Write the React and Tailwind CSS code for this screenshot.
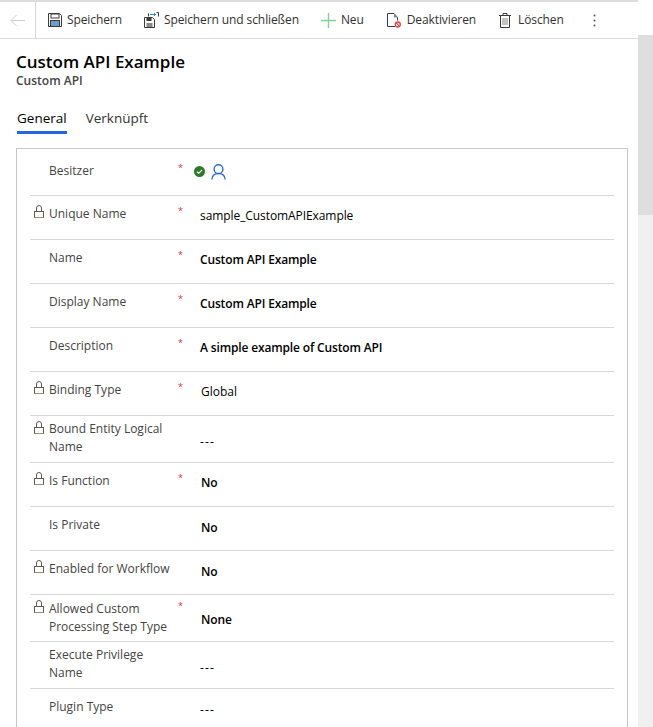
// Toolbar icons
const SaveIcon = () => (
  <svg width="14" height="14" viewBox="0 0 14 14" fill="none">
    <path d="M.5.5h11l2 2v11H.5z" fill="#fff" stroke="#3b3a39" />
    <rect x="3" y="1" width="8" height="4" fill="#fff" stroke="#3b3a39" strokeWidth="1" />
    <rect x="2.5" y="7.5" width="9" height="6" fill="#6d9ec9" stroke="#3b3a39" />
  </svg>
)

const SaveCloseIcon = () => (
  <svg width="15" height="16" viewBox="0 0 15 16" fill="none">
    <path d="M.5 5.5h8l2 2v8H.5z" fill="#fff" stroke="#3b3a39" />
    <rect x="2.5" y="6" width="5" height="3" fill="#3b3a39" />
    <rect x="2.5" y="11" width="6" height="4" fill="#8a8886" />
    <path d="M4.5 1.5v3M14.5.5v4M12.5.5h2" stroke="#3b3a39" />
    <path d="M6 2.5h5.5M10 1l1.5 1.5L10 4" stroke="#2b88d8" />
  </svg>
)

const PlusIcon = () => (
  <svg width="15" height="15" viewBox="0 0 15 15">
    <path d="M7.5 0v15M0 7.5h15" stroke="#83cfa0" strokeWidth="1.4" />
  </svg>
)

const DeactivateIcon = () => (
  <svg width="14" height="15" viewBox="0 0 14 15" fill="none">
    <path d="M8 13.5H.5V.5h6.5l3.5 4v3" stroke="#3b3a39" />
    <path d="M7 .5l3.5 4H7z" fill="#8a8886" />
    <circle cx="10.8" cy="11.5" r="2.5" fill="#fff" stroke="#e0454f" strokeWidth="1.3" />
    <path d="M9.1 9.8l3.4 3.4" stroke="#e0454f" strokeWidth="1.2" />
  </svg>
)

const TrashIcon = () => (
  <svg width="12" height="15" viewBox="0 0 12 15" fill="none">
    <path d="M0 2.5h12M4 2.5V.5h4v2" stroke="#3b3a39" />
    <path d="M1.5 2.5v12h9v-12" stroke="#3b3a39" />
    <path d="M4 5v7M6 5v7M8 5v7" stroke="#8a8886" />
  </svg>
)

const LockIcon = () => (
  <svg width="10" height="13" viewBox="0 0 10 13" fill="none">
    <path d="M2.5 7V3a2.5 2.5 0 0 1 5 0v4" stroke="#5f5b57" />
    <rect x=".5" y="6.5" width="9" height="6" fill="#fff" stroke="#5f5b57" />
    <path d="M.5 12.5h9" stroke="#a08c73" />
  </svg>
)

const StatusIcon = () => (
  <svg width="11" height="11" viewBox="0 0 11 11" fill="none">
    <circle cx="5.5" cy="5.5" r="5.5" fill="#2f7a2a" />
    <path d="M3 5.8l1.7 1.5L8 4" stroke="#fff" strokeWidth="1.2" />
  </svg>
)

const UserIcon = () => (
  <svg width="15" height="16" viewBox="0 0 15 16" fill="none">
    <circle cx="7.5" cy="5.2" r="4.4" stroke="#2a6fc9" strokeWidth="1.4" />
    <path d="M.8 15.5c.3-3.5 2.8-6 6.7-6s6.4 2.5 6.7 6" stroke="#2a6fc9" strokeWidth="1.4" />
  </svg>
)

const ACTIONS = [
  { label: 'Speichern', icon: <SaveIcon />, cls: 'gap-[5px]' },
  { label: 'Speichern und schließen', icon: <SaveCloseIcon />, cls: 'gap-[5px]' },
  { label: 'Neu', icon: <PlusIcon />, cls: 'gap-[5px]' },
  { label: 'Deaktivieren', icon: <DeactivateIcon />, cls: 'gap-[6px] ml-[1px]' },
  { label: 'Löschen', icon: <TrashIcon />, cls: 'gap-[7px] ml-[1px]' },
]

// row kinds: first row, one line label, two line label
const ROW = {
  first: { h: 'h-[47px]', lock: 'pt-[9px]', label: 'pt-[13px]', star: 'pt-[10px]', value: 'pb-[1px]' },
  single: { h: 'h-[44px]', lock: 'pt-[9px]', label: 'pt-[9px]', star: 'pt-[6px]', value: 'pb-[3px]' },
  double: { h: 'h-[47px]', lock: 'pt-[5px]', label: 'pt-[4px]', star: 'pt-[2px]', value: 'pt-[5px]' },
}

const STRONG = 'font-semibold tracking-[-0.15px]'
const EMPTY = 'font-normal tracking-[1.2px]'

const FIELDS = [
  { label: 'Besitzer', required: true, owner: true, kind: 'first' },
  { label: 'Unique Name', required: true, locked: true, value: 'sample_CustomAPIExample', kind: 'single', cls: 'tracking-[-0.08px]' },
  { label: 'Name', required: true, value: 'Custom API Example', kind: 'single', cls: STRONG },
  { label: 'Display Name', required: true, value: 'Custom API Example', kind: 'single', cls: STRONG },
  { label: 'Description', required: true, value: 'A simple example of Custom API', kind: 'single', cls: STRONG },
  { label: 'Binding Type', required: true, locked: true, value: 'Global', kind: 'single', cls: 'pl-[1px]' },
  { label: 'Bound Entity Logical Name', locked: true, value: '---', kind: 'double', cls: EMPTY },
  { label: 'Is Function', required: true, locked: true, value: 'No', kind: 'single', cls: `${STRONG} pl-[1px]` },
  { label: 'Is Private', value: 'No', kind: 'single', cls: `${STRONG} pl-[1px] pb-[1px]` },
  { label: 'Enabled for Workflow', locked: true, value: 'No', kind: 'single', cls: `${STRONG} pl-[1px] pb-[1px]` },
  { label: 'Allowed Custom Processing Step Type', required: true, locked: true, value: 'None', kind: 'double', labelCls: 'pt-[5px]', cls: `${STRONG} pl-[1px] pt-[3px]` },
  { label: 'Execute Privilege Name', value: '---', kind: 'double', cls: EMPTY },
  { label: 'Plugin Type', value: '---', kind: 'single', cls: EMPTY },
]

function FieldRow({ field }) {
  const r = ROW[field.kind]
  return (
    <div className={`flex ${r.h} border-b border-[#d8d8d8] last:border-b-0`}>
      <div className={`w-[19px] shrink-0 pl-[4px] ${r.lock}`}>{field.locked && <LockIcon />}</div>
      <div className={`w-[129px] shrink-0 text-[12px] leading-[18px] text-[#444] ${field.labelCls || r.label}`}>{field.label}</div>
      <div className={`w-[22px] shrink-0 text-[9px] leading-[18px] text-[#d13438] ${r.star}`}>{field.required && '*'}</div>
      <div className={`flex flex-1 items-center text-[12px] text-black ${field.cls?.includes('pb-') || field.cls?.includes('pt-') ? '' : r.value} ${field.cls || ''}`}>
        {field.owner ? (
          <span className="-ml-[6px] flex items-center gap-[6px]"><StatusIcon /><UserIcon /></span>
        ) : (
          field.value
        )}
      </div>
    </div>
  )
}

export default function App() {
  return (
    <div className="flex h-[727px] w-[653px] overflow-hidden bg-white font-['Open_Sans',sans-serif]">
      <div className="w-[638px] shrink-0">
        {/* Command bar */}
        <div className="flex h-[39px] items-center border-t-2 border-b border-[#dcdcdc]">
          <div className="flex h-full w-[36px] items-center justify-center border-r border-[#d8d8d8]">
            <svg width="15" height="13" viewBox="0 0 15 13" fill="none">
              <path d="M15 6.5H1M6.5 1L1 6.5 6.5 12" stroke="#d0cfce" />
            </svg>
          </div>
          <div className="flex items-center gap-[22px] pl-[12px]">
            {ACTIONS.map((a) => (
              <div key={a.label} className={`flex shrink-0 items-center text-[12px] tracking-[-0.1px] text-[#323130] ${a.cls}`}>
                {a.icon}
                <span className="whitespace-nowrap">{a.label}</span>
              </div>
            ))}
            <svg className="ml-[7px]" width="3" height="13" viewBox="0 0 3 13">
              <circle cx="1.5" cy="1.5" r="1" fill="#555" />
              <circle cx="1.5" cy="6.5" r="1" fill="#555" />
              <circle cx="1.5" cy="11.5" r="1" fill="#555" />
            </svg>
          </div>
        </div>

        {/* Header */}
        <div className="px-4 pt-[11px]">
          <h1 className="text-[17px] font-semibold leading-[23px] text-black">Custom API Example</h1>
          <p className="text-[12px] font-semibold leading-[15px] text-[#444]">Custom API</p>
          <div className="mt-[20px] flex gap-[19px] pl-[1px] text-[13.5px] leading-[20px]">
            <div className="border-b-[3px] border-[#2266e3] pb-[3px] font-medium text-black">General</div>
            <div className="font-medium text-[#333]">Verknüpft</div>
          </div>
        </div>

        {/* Form card */}
        <div className="ml-4 mt-[14px] w-[612px] border border-b-0 border-[#c8c8c8] px-[13px]">
          {FIELDS.map((f) => (
            <FieldRow key={f.label} field={f} />
          ))}
        </div>
      </div>

      {/* Scrollbar */}
      <div className="flex w-[15px] shrink-0 flex-col pt-[35px]">
        <div className="h-[180px] bg-[#dedede]" />
        <div className="flex-1 bg-[#f0f0f0]" />
      </div>
    </div>
  )
}
